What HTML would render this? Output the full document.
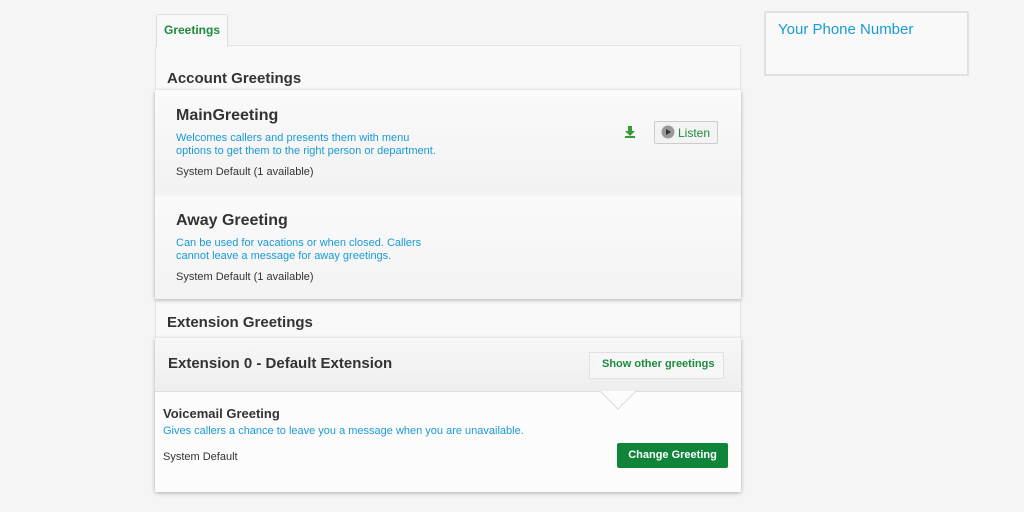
<!DOCTYPE html>
<html><head><style>
body{margin:0;width:1024px;height:512px;background:#f5f5f5;font-family:"Liberation Sans",sans-serif;position:relative;overflow:hidden}
.a{position:absolute}
.blue{color:#1a9ad6}
.g{color:#1e8a3e}
</style></head><body>
<div class="a" style="left:156px;top:14px;width:70px;height:32px;background:#f9f9f9;border:1px solid #ddd;border-bottom:none;border-radius:3px 3px 0 0;z-index:2"></div>
<div class="a g" style="left:164px;top:23px;font-size:12px;font-weight:bold;z-index:3">Greetings</div>
<div class="a" style="left:155px;top:45px;width:584px;height:295px;background:#f9f9f9;border:1px solid #e3e3e3"></div>
<div class="a" style="left:167px;top:70px;font-size:15px;font-weight:bold;color:#333">Account Greetings</div>
<div class="a" style="left:155px;top:90px;width:586px;height:209px;background:linear-gradient(#fafafa,#f2f2f2 50%,#fafafa 51%,#f3f3f3);box-shadow:0 1px 4px rgba(0,0,0,.3)"></div>
<div class="a" style="left:176px;top:107px;font-size:16px;font-weight:bold;color:#333">MainGreeting</div>
<div class="a blue" style="left:176px;top:132px;font-size:11px;line-height:13px">Welcomes callers and presents them with menu<br>options to get them to the right person or department.</div>
<div class="a" style="left:176px;top:166px;font-size:11px;color:#333">System Default (1 available)</div>
<svg class="a" style="left:624px;top:126px" width="12" height="12"><path d="M4 0h4v5h3L6 10 1 5h3z" fill="#3a9a3a"/><rect x="1" y="10" width="10" height="2" fill="#3a9a3a"/></svg>
<div class="a" style="left:654px;top:121px;width:62px;height:21px;background:#f3f3f3;border:1px solid #ccc;border-radius:2px"></div>
<svg class="a" style="left:661px;top:125px" width="14" height="14"><circle cx="7" cy="7" r="6.5" fill="#999"/><path d="M5 4l5 3-5 3z" fill="#333"/></svg>
<div class="a g" style="left:678px;top:126px;font-size:12px">Listen</div>
<div class="a" style="left:176px;top:212px;font-size:16px;font-weight:bold;color:#333">Away Greeting</div>
<div class="a blue" style="left:176px;top:237px;font-size:11px;line-height:13px">Can be used for vacations or when closed. Callers<br>cannot leave a message for away greetings.</div>
<div class="a" style="left:176px;top:271px;font-size:11px;color:#333">System Default (1 available)</div>
<div class="a" style="left:167px;top:314px;font-size:15px;font-weight:bold;color:#333">Extension Greetings</div>
<div class="a" style="left:155px;top:338px;width:586px;height:154px;background:#fcfcfc;box-shadow:0 1px 4px rgba(0,0,0,.3)"></div>
<div class="a" style="left:155px;top:338px;width:586px;height:53px;background:linear-gradient(#f7f7f7,#eeeeee);border-bottom:1px solid #ddd"></div>
<svg class="a" style="left:600px;top:391px" width="36" height="20"><path d="M0 0L18 18L36 0" fill="#fcfcfc" stroke="#ddd"/></svg>
<div class="a" style="left:168px;top:355px;font-size:15px;font-weight:bold;color:#333">Extension 0 - Default Extension</div>
<div class="a" style="left:589px;top:352px;width:133px;height:25px;background:#f7f7f7;border:1px solid #e0e0e0"></div>
<div class="a g" style="left:602px;top:358px;font-size:11px;font-weight:bold">Show other greetings</div>
<div class="a" style="left:163px;top:406px;font-size:13px;font-weight:bold;color:#333">Voicemail Greeting</div>
<div class="a blue" style="left:163px;top:425px;font-size:11px">Gives callers a chance to leave you a message when you are unavailable.</div>
<div class="a" style="left:163px;top:451px;font-size:11px;color:#333">System Default</div>
<div class="a" style="left:617px;top:443px;width:111px;height:25px;background:#10853a;border-radius:2px;color:#fff;font-size:11px;font-weight:bold;text-align:center;line-height:25px">Change Greeting</div>
<div class="a" style="left:764px;top:11px;width:201px;height:61px;background:#f9f9f9;border:2px solid #e0e0e0;border-radius:2px"></div>
<div class="a blue" style="left:778px;top:21px;font-size:15px">Your Phone Number</div>
</body></html>
